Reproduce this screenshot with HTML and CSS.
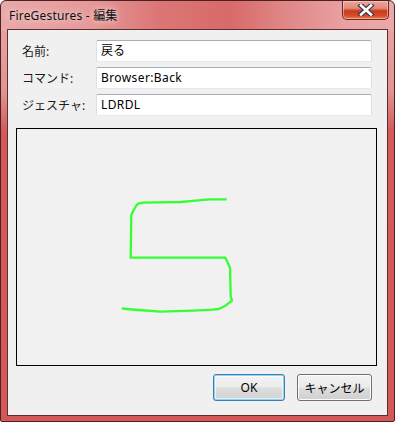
FILE: index.html
```html
<!DOCTYPE html>
<html lang="ja">
<head>
<meta charset="utf-8">
<title>FireGestures - 編集</title>
<link rel="stylesheet" href="styles.css">
</head>
<body>
<div class="window">
  <div class="titlebar">
    <span class="title">FireGestures - 編集</span>
    <div class="close">
      <svg width="18" height="12" viewBox="0 0 18 12">
        <path d="M4 1.5 L14 10.5 M14 1.5 L4 10.5" stroke="#3a3a4a" stroke-width="5" stroke-linecap="square"/>
        <path d="M4 1.5 L14 10.5 M14 1.5 L4 10.5" stroke="#ffffff" stroke-width="2.6" stroke-linecap="square"/>
      </svg>
    </div>
  </div>
  <div class="client">
    <div class="form">
      <div class="row"><span class="label">名前:</span><div class="field">戻る</div></div>
      <div class="row"><span class="label">コマンド:</span><div class="field latin">Browser:Back</div></div>
      <div class="row"><span class="label">ジェスチャ:</span><div class="field latin">LDRDL</div></div>
    </div>
    <div class="canvas">
      <svg class="gesture" width="359" height="236" viewBox="0 0 359 236">
        <polyline fill="none" stroke="#33ff33" stroke-width="2.3" stroke-linejoin="round"
          points="209.7,70.3 193,70.3 178.7,71.7 164,73 126.3,73.7 121,74.7 119,77 116.3,81.7 114.3,86 113.7,128.7 208.3,128.7 210.3,132.7 213,138.7 213.7,167 215,171.7 212.3,173.7 208,177 201.7,180 195.3,180.7 176.3,181.7 143.7,182.7 121.3,181 109.7,180 104.7,179.3"/>
      </svg>
    </div>
    <div class="buttons">
      <div class="btn default">OK</div>
      <div class="btn cancel">キャンセル</div>
    </div>
  </div>
</div>
</body>
</html>
```

FILE: styles.css
```css
html, body {
  margin: 0;
  padding: 0;
  background: #ffffff;
}

body {
  font-family: "Noto Sans", "Noto Sans CJK JP", sans-serif;
  font-size: 12px;
  color: #000;
}

.window {
  box-sizing: border-box;
  width: 395px;
  height: 422px;
  border: 1px solid #4a2222;
  border-radius: 6px 6px 2px 2px;
  padding: 0 6px 5px 6px;
  display: flex;
  flex-direction: column;
  background:
    linear-gradient(to right, #eaa9a9 0%, #e69a9a 22%, #dc7676 40%, #d86a6a 58%, #e08686 72%, #e9a2a2 88%, #eba8a8 100%) top left / 100% 30px no-repeat,
    linear-gradient(to bottom, #e7a1a1 30px, #e29494 90px, #d45a5a 130px, #d35858 100%);
}

.titlebar {
  height: 28px;
  display: flex;
  align-items: flex-start;
  padding-left: 2px;
}

.title {
  margin-top: 7px;
  color: #111;
  font-size: 12px;
  line-height: 16px;
  letter-spacing: 0.2px;
  text-shadow: 0 0 6px rgba(255, 255, 255, 0.7), 0 0 10px rgba(255, 255, 255, 0.4);
}

.close {
  margin-left: auto;
  margin-right: -1px;
  width: 47px;
  height: 19px;
  box-sizing: border-box;
  border: 1px solid #6b2b25;
  border-top: none;
  border-radius: 0 0 5px 5px;
  background: linear-gradient(to bottom, #eba59a 0%, #e28a78 40%, #c9391e 55%, #d54a2a 80%, #e87a50 100%);
  box-shadow: inset 0 0 0 1px rgba(255, 220, 210, 0.5);
  display: flex;
  align-items: center;
  justify-content: center;
}

.client {
  flex: 1;
  border: 1px solid #5e2e2e;
  background: #f0f0f0;
  display: flex;
  flex-direction: column;
  padding: 10px 0 14px 0;
}

.form {
  display: flex;
  flex-direction: column;
  gap: 5px;
  padding: 0 15px 0 14px;
}

.row {
  display: flex;
  align-items: center;
  height: 22px;
}

.label {
  width: 74px;
  flex: none;
  color: #1a1a1a;
}

.field {
  flex: 1;
  height: 22px;
  box-sizing: border-box;
  background: #fff;
  border: 1px solid #dbdfe6;
  border-top-color: #abadb3;
  border-bottom-color: #e3e9ef;
  border-radius: 2px;
  padding-left: 4px;
  line-height: 20px;
  color: #000;
}

.latin {
  letter-spacing: 0.4px;
}

.canvas {
  margin: 12px 10px 0 8px;
  height: 238px;
  box-sizing: border-box;
  border: 1px solid #000;
  background: #f1f1f1;
}

.gesture {
  display: block;
}

.buttons {
  display: flex;
  justify-content: flex-end;
  gap: 12px;
  margin-top: 8px;
  padding-right: 15px;
}

.btn {
  height: 27px;
  box-sizing: border-box;
  border-radius: 3px;
  display: flex;
  align-items: center;
  justify-content: center;
  color: #000;
  background: linear-gradient(to bottom, #f2f2f2 0%, #ebebeb 48%, #dddddd 52%, #cfcfcf 100%);
}

.default {
  width: 72px;
  border: 1px solid #3c7fb1;
  box-shadow: inset 0 0 0 1px #8fd3f5, inset 0 0 0 2px rgba(255, 255, 255, 0.6);
  background: linear-gradient(to bottom, #f3f3f3 0%, #ececec 48%, #dedede 52%, #d2d2d2 100%);
}

.cancel {
  width: 75px;
  border: 1px solid #707070;
  box-shadow: inset 0 0 0 1px #fcfcfc;
}
```
